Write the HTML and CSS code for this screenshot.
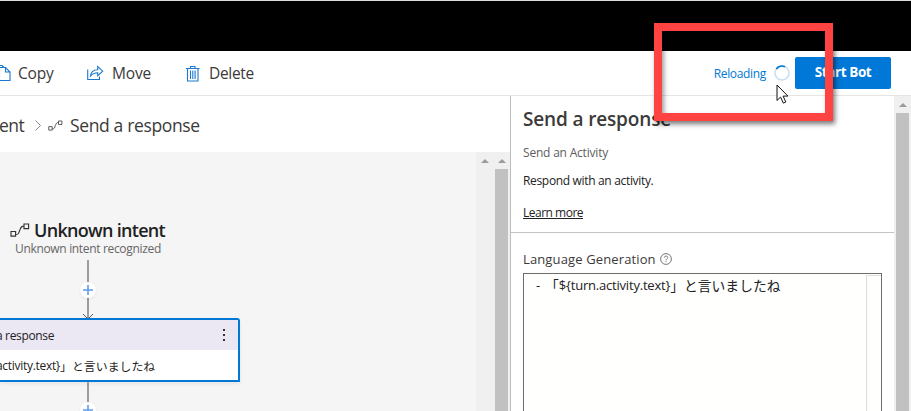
FILE: index.html
```html
<!DOCTYPE html>
<html lang="en">
<head>
<meta charset="utf-8">
<title>Bot Composer</title>
<link rel="stylesheet" href="styles.css">
</head>
<body>
<svg class="defs" width="0" height="0">
  <symbol id="flow" viewBox="0 0 20 14"><path d="M1 8.5h4.6v4.6H1zM14 1h4.6v4.6H14zM5.6 11.5c3.6 0 3-1.500 4.200-4.400S11.500 3 14 3" fill="none" stroke="currentColor" stroke-width="1.150"/></symbol>
  <symbol id="up" viewBox="0 0 8 4"><path d="M0 4L4 0l4 4z" fill="#9b9b9b"/></symbol>
  <symbol id="plus" viewBox="0 0 10 10"><path d="M5 0v10M0 5h10" stroke="#5c9cf0" stroke-width="1.600"/></symbol>
</svg>
<div class="app">
  <header class="topbar"></header>
  <nav class="toolbar">
    <button class="tool copy"><svg width="14" height="18" viewBox="0 0 14 18"><path d="M-1 1.500h5M1.500 3.500h6l4.500 4.500v8.500H1.500zM7.500 3.500V8H12M4 1.500l2 2" /></svg><span class="t-copy">Copy</span></button>
    <button class="tool move"><svg width="17" height="16" viewBox="0 0 17 16"><path d="M.7 4.500v10h11.800v-3M3.500 11c.5-4.500 3-6.200 7.200-6.200V1.500l5 4.700-5 4.600V7.700C7.500 7.700 5.500 8.500 3.500 11z"/></svg><span class="t-move">Move</span></button>
    <button class="tool delete"><svg width="14" height="17" viewBox="0 0 14 17"><path d="M0 3.500h13.500M4.500 3.500v-2h4.500v2M1.500 3.500v12.500h10.500v-12.500"/><path d="M4.500 5.500v8.500M6.800 5.500v8.500M9.100 5.500v8.500"/></svg><span class="t-delete">Delete</span></button>
    <span class="reloading">Reloading</span>
    <svg class="spinner" width="16" height="16" viewBox="0 0 16 16"><circle cx="8" cy="8" r="7" fill="none" stroke="#c7e0f4" stroke-width="1.600"/><path d="M2.300 4A7 7 0 0 1 11 1.700" fill="none" stroke="#0078d4" stroke-width="1.600"/></svg>
    <button class="start"><span>Start Bot</span></button>
  </nav>
  <main class="main">
    <section class="left">
      <div class="crumbs">
        <span class="c-ent">ent</span>
        <svg class="chev" width="6" height="11" viewBox="0 0 6 11"><path d="M.5.500l5 5-5 5" fill="none" stroke="#8a8886"/></svg>
        <svg class="c-icon" width="15" height="11"><use href="#flow"/></svg>
        <span class="c-send">Send a response</span>
      </div>
      <div class="work">
        <div class="canvas">
          <div class="trigger"><svg width="20" height="14"><use href="#flow"/></svg><span>Unknown intent</span></div>
          <div class="subtitle"><span>Unknown intent recognized</span></div>
          <div class="edge first"><i class="add"><svg width="10" height="10"><use href="#plus"/></svg></i><svg class="arrow" width="10" height="5" viewBox="0 0 10 5"><path d="M0 0l5 5 5-5" fill="none" stroke="#555"/></svg></div>
          <div class="node">
            <div class="node-head"><span>a response</span><svg width="4" height="12" viewBox="0 0 4 12"><path d="M1 0h2v2H1zM1 5h2v2H1zM1 10h2v2H1z" fill="#333"/></svg></div>
            <div class="node-body"><span class="n-code">activity.text}</span><span class="n-jp">」と言いましたね</span></div>
          </div>
          <div class="edge last"><i class="add"><svg width="10" height="10"><use href="#plus"/></svg></i></div>
        </div>
        <div class="track inner"><svg width="8" height="4"><use href="#up"/></svg></div>
        <div class="track"><svg width="8" height="4"><use href="#up"/></svg><i class="thumb"></i></div>
      </div>
    </section>
    <section class="props">
      <div class="intro">
        <h1><span>Send a response</span></h1>
        <p class="kind"><span>Send an Activity</span></p>
        <p class="desc"><span>Respond with an activity.</span></p>
        <p class="learn"><a>Learn more</a></p>
      </div>
      <div class="form">
        <div class="label"><span>Language Generation</span><svg width="12" height="12" viewBox="0 0 12 12" fill="none" stroke="#666" stroke-width=".9"><circle cx="6" cy="6" r="5.400"/><path d="M4.300 4.700c0-2.200 3.400-2.100 3.400-.1 0 1.200-1.700 1.300-1.700 2.700M6 8.200v1"/></svg></div>
        <div class="editor"><span class="dash">-</span><span class="e-jp">「</span><span class="e-code">${turn.activity.text}</span><span class="e-jp">」と言いましたね</span><i class="ruler"></i></div>
      </div>
    </section>
    <div class="track outer"><svg width="8" height="4"><use href="#up"/></svg><i class="thumb"></i></div>
  </main>
</div>
<div class="highlight"></div>
<svg class="cursor" width="13" height="20" viewBox="0 0 13 20"><path d="M1 1v15.500l3.600-3.400 2.700 6 2.500-1.100-2.700-5.900h4.800z" fill="#fff" stroke="#111"/></svg>
</body>
</html>
```

FILE: styles.css
```css
* { box-sizing: border-box; }
body { margin: 0; width: 911px; height: 411px; overflow: hidden; background: #fff; color: #3b3a39; font-family: "Open Sans", "Noto Sans CJK JP", sans-serif; }
span, a { white-space: nowrap; }
svg, i { display: block; flex: none; }
.defs { position: absolute; }
.app { display: flex; flex-direction: column; height: 411px; }
.topbar { height: 51px; background: #000; border-top: 1px solid #dcdedd; flex: none; }
.toolbar { display: flex; align-items: center; height: 45px; flex: none; border-bottom: 1px solid #e5e5e5; }
button { border: 0; padding: 0; background: none; font: inherit; color: inherit; }
.tool { display: flex; align-items: center; font-size: 15.5px; line-height: 22px; }
.tool svg { fill: none; stroke: #1a78d0; stroke-width: 1.1; overflow: visible; }
.copy { width: 87px; gap: 6px; margin-left: -2px; }
.move { width: 101px; gap: 8px; padding-left: 2px; }
.delete { gap: 9px; width: 100px; }
.t-copy, .t-move { letter-spacing: -0.15px; }
.t-delete { letter-spacing: -0.3px; }
.reloading { margin-left: auto; font-size: 12px; color: #0078d4; letter-spacing: -0.33px; margin-top: 1px; }
.spinner { margin: 0 5px 0 8px; }
.start { width: 96px; height: 32px; border-radius: 2px; background: #0078d7; color: #fff; font-size: 13.5px; font-weight: 700; letter-spacing: -0.4px; margin-right: 20px; padding-bottom: 2px; }
.main { display: flex; flex: 1; min-height: 0; }
.left { width: 511px; border-right: 1px solid #bdbdbd; display: flex; flex-direction: column; flex: none; }
.crumbs { height: 56px; display: flex; align-items: center; font-size: 17.5px; flex: none; padding-top: 2px; }
.c-ent { width: 35px; margin-left: -1px; margin-right: 1px; letter-spacing: -0.5px; }
.chev { margin-right: 7px; }
.c-icon { margin-right: 7px; color: #444; }
.c-send { letter-spacing: -0.36px; }
.work { flex: 1; display: flex; min-height: 0; background: #f5f5f5; }
.canvas { width: 476px; overflow: hidden; padding-top: 65px; }
.trigger { height: 25px; line-height: 22px; display: flex; align-items: center; padding-left: 10px; gap: 4px; font-size: 18px; font-weight: 600; letter-spacing: -0.7px; color: #222; }
.trigger svg { color: #333; }
.subtitle { height: 18px; line-height: 14px; padding-left: 15px; font-size: 12px; letter-spacing: -0.33px; color: #666; }
.edge { width: 2px; margin-left: 87px; background: #9c9c9c; position: relative; }
.first { height: 58px; }
.last { height: 40px; }
.add { position: absolute; left: -7px; top: 22px; width: 16px; height: 16px; border-radius: 50%; background: #fff; padding: 3px; box-shadow: 0 1px 3px #0001; }
.last .add { top: 20px; }
.arrow { position: absolute; left: -4px; bottom: -1px; }
.node { position: relative; width: 240px; height: 64px; border: 2px solid #0078d4; border-left: 0; border-radius: 0 3px 0 0; background: #fff; box-shadow: 0 2px 4px #0001; font-size: 12px; color: #222; }
.node-head { height: 30px; background: #ebe7f3; display: flex; justify-content: space-between; align-items: center; padding-right: 12px; }
.node-head span { margin-left: -4px; letter-spacing: -0.35px; }
.node-body { height: 30px; display: flex; align-items: center; }
.n-code { margin-left: -4px; letter-spacing: -0.3px; }
.n-jp { font-size: 11.9px; }
.track { width: 17px; background: #f0f0f0; display: flex; flex-direction: column; align-items: center; flex: none; padding-top: 7px; }
.track svg { margin-bottom: 6px; }
.thumb { width: 13px; flex: 1; background: #c1c1c1; }
.props { width: 383px; display: flex; flex-direction: column; }
.intro { height: 137px; border-bottom: 1px solid #c4c4c4; padding: 10px 12px 0; flex: none; }
h1, p { margin: 0; }
h1 { height: 27px; line-height: 27px; font-size: 19px; font-weight: 600; letter-spacing: -0.15px; }
.kind, .desc { font-size: 12px; line-height: 18px; height: 28px; }
.kind { margin-top: 11px; color: #605e5c; letter-spacing: -0.2px; }
.desc { color: #222; height: 32px; letter-spacing: -0.33px; }
.learn { font-size: 12px; line-height: 18px; color: #222; text-decoration: underline; letter-spacing: -0.5px; }
.form { flex: 1; padding: 17px 12px 0; display: flex; flex-direction: column; }
.label { height: 23px; line-height: 18px; display: flex; gap: 4px; font-size: 13px; letter-spacing: 0.13px; }
.label svg { margin-top: 3px; }
.editor { flex: 1; width: 359px; border: 1px solid #6e6e68; border-bottom: 0; background: #fffffe; display: flex; font-size: 13px; line-height: 23px; padding-left: 12px; color: #222; }
.dash { width: 9px; }
.e-jp { font-size: 13.8px; line-height: 23px; }
.e-code { letter-spacing: -0.2px; }
.ruler { margin-left: auto; width: 15px; border-left: 1px solid #ddd; border-top: 1px solid #ddd; margin-top: 1px; }
.highlight { position: absolute; left: 654px; top: 23px; width: 179px; height: 98px; border: 8px solid #ff4343; box-shadow: 2px 3px 5px #0008, inset 2px 3px 5px #0006; }
.cursor { position: absolute; left: 776px; top: 84px; }
```
